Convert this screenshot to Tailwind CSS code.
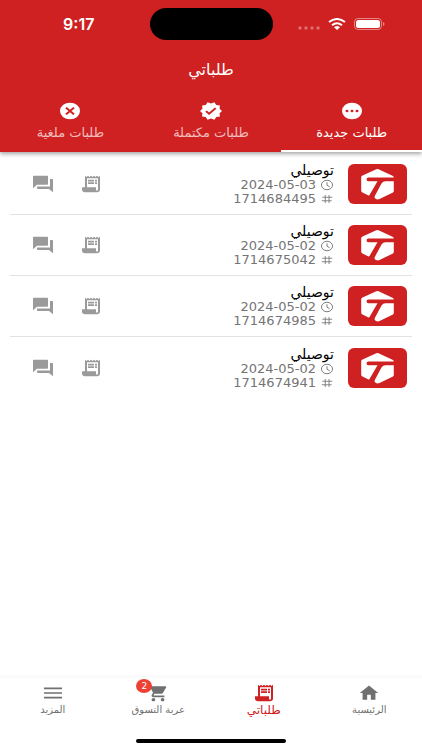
<!DOCTYPE html>
<html lang="ar" dir="rtl">
<head>
<meta charset="utf-8">
<meta name="viewport" content="width=device-width, initial-scale=1">
<title>طلباتي</title>
<script src="https://cdn.jsdelivr.net/npm/@tailwindcss/browser@4"></script>
</head>
<body class="min-h-screen flex flex-col bg-white font-['DejaVu_Sans',sans-serif]">
<svg class="hidden" aria-hidden="true">
  <symbol id="receipt" viewBox="0 0 24 24" preserveAspectRatio="none"><path d="M19.500 3.500L18 2l-1.500 1.500L15 2l-1.500 1.500L12 2l-1.500 1.500L9 2 7.500 3.500 6 2v14H3v3c0 1.660 1.340 3 3 3h12c1.660 0 3-1.340 3-3V2l-1.500 1.500zM19 19c0 .55-.45 1-1 1s-1-.45-1-1v-3H8V5h11v14zM9 7h6v2H9zM16 7h2v2h-2zM9 10h6v2H9zM16 10h2v2h-2z"/></symbol>
  <symbol id="chat" viewBox="0 0 24 24" preserveAspectRatio="none"><path d="M21 6h-2v9H6v2c0 .55.45 1 1 1h11l4 4V7c0-.55-.45-1-1-1zm-4 6V3c0-.55-.45-1-1-1H3c-.55 0-1 .45-1 1v14l4-4h10c.55 0 1-.45 1-1z"/></symbol>
  <symbol id="clock" viewBox="0 0 24 24" preserveAspectRatio="none"><path fill="none" stroke="currentColor" stroke-width="1.700" d="M12 2.500a9.500 9.500 0 1 0 0 19a9.500 9.500 0 1 0 0-19zM12 6.500V12.500l4.500 3"/></symbol>
  <symbol id="hash" viewBox="0 0 24 24" preserveAspectRatio="none"><path fill="none" stroke="currentColor" stroke-width="1.600" d="M4 8.500h17M3 15.500h17M9 4v16M15.500 4v16"/></symbol>
  <symbol id="brand" viewBox="0 0 59 40" preserveAspectRatio="none">
    <rect width="59" height="40" rx="6" fill="#cf2122"/>
    <path fill="#fff" d="M30.500 5.300L44.500 11.700Q45.800 12.500 45.800 13.500H20.500Q18.500 13.700 18.500 15.300Q18.500 17.200 20.500 17.300H29.500L21.500 31Q21 31.800 20 31.300L14.500 28.500Q13.200 27.800 13.200 26.500V13.200Q13.200 12.200 14.500 11.600L28.300 5.300Q29.500 4.800 30.500 5.300z"/>
    <path fill="#fff" d="M37.500 17.300H45.800V27Q45.800 28 44.500 28.700L31.500 35Q29.500 35.800 28 35Q25.800 34 26.800 32L33.500 19.500Q35 17.300 37.500 17.300z"/>
  </symbol>
</svg>

<header class="relative bg-[#cf2122] text-white shadow-[0_2px_4px_rgba(0,0,0,0.35)]">
  <div dir="ltr" class="grid grid-cols-[1fr_auto_1fr] items-center pt-2">
    <div class="ps-2 text-center font-['Inter',sans-serif] text-base font-semibold">9:17</div>
    <div class="h-8 w-[123px] rounded-full bg-black"></div>
    <div class="flex items-center justify-center gap-2 pe-3">
      <svg class="w-[22px] h-1 mt-2" viewBox="0 0 22 4" fill="#fff" fill-opacity=".35"><circle cx="2" cy="2" r="1.700"/><circle cx="8" cy="2" r="1.700"/><circle cx="14" cy="2" r="1.700"/><circle cx="20" cy="2" r="1.700"/></svg>
      <svg class="w-[18px] h-3" viewBox="0 0 18 12" preserveAspectRatio="none" fill="none" stroke="#fff" stroke-width="2"><path d="M1 4Q9-2 17 4M4 7.200Q9 3.200 14 7.200"/><path fill="#fff" stroke="none" d="M6 9.200Q9 7 12 9.200L9 12z"/></svg>
      <svg class="w-[31px] h-3" viewBox="0 0 31 12"><rect x=".5" y=".5" width="27" height="11" rx="3.500" fill="none" stroke="#fff" stroke-opacity=".45"/><rect x="2" y="2" width="24" height="8" rx="2.500" fill="#fff"/><path d="M29 4v4q1.500-.6 1.500-2t-1.500-2" fill="#fff" fill-opacity=".5"/></svg>
    </div>
  </div>
  <h1 class="pt-[18px] text-center text-base leading-6 font-normal">طلباتي</h1>
  <div role="tablist" class="grid grid-cols-3 pt-[19px] text-[13px] leading-4">
    <button role="tab" aria-selected="true" class="flex flex-col items-center gap-1 pb-[9px] border-b-2 border-white">
      <svg class="w-6 h-5" viewBox="0 0 24 24" preserveAspectRatio="none"><circle cx="12" cy="12" r="10" fill="#fff"/><g fill="#cf2122"><circle cx="7" cy="12" r="1.500"/><circle cx="12" cy="12" r="1.500"/><circle cx="17" cy="12" r="1.500"/></g></svg>
      <span>طلبات جديدة</span>
    </button>
    <button role="tab" aria-selected="false" class="flex flex-col items-center gap-1 pb-[9px] border-b-2 border-transparent">
      <svg class="w-6 h-5" viewBox="0 0 24 24" preserveAspectRatio="none" fill="#fff"><path d="M23 12l-2.440-2.790.34-3.690-3.610-.82-1.890-3.200L12 2.960 8.600 1.500 6.710 4.690 3.100 5.500l.34 3.700L1 12l2.440 2.790-.34 3.700 3.610.82L8.600 22.500l3.400-1.470 3.400 1.460 1.890-3.190 3.610-.82-.34-3.690L23 12zm-12.910 4.720l-3.800-3.810 1.480-1.480 2.320 2.330 5.850-5.870 1.480 1.480-7.330 7.350z"/></svg>
      <span class="text-white/70">طلبات مكتملة</span>
    </button>
    <button role="tab" aria-selected="false" class="flex flex-col items-center gap-1 pb-[9px] border-b-2 border-transparent">
      <svg class="w-6 h-5" viewBox="0 0 24 24" preserveAspectRatio="none"><circle cx="12" cy="12" r="10" fill="#fff"/><path d="M8 8l8 8M16 8l-8 8" stroke="#cf2122" stroke-width="2.200"/></svg>
      <span class="text-white/70">طلبات ملغية</span>
    </button>
  </div>
</header>

<main class="grow px-[10px] pt-[2px]">
  <ul class="divide-y divide-[#e2e2e2]">
    <li class="flex items-center h-[61px] ps-[5px] pe-[21px]">
      <svg class="w-[59px] h-10" role="img" aria-label="توصيلي"><use href="#brand"/></svg>
      <div class="grow ps-[14px] text-[13px] leading-[14px] text-[#757575]">
        <div class="text-sm text-black leading-4">توصيلي</div>
        <div class="flex items-center gap-1"><svg class="w-[14px] h-3"><use href="#clock"/></svg><span dir="ltr">2024-05-03</span></div>
        <div class="flex items-center gap-1"><svg class="w-[14px] h-3"><use href="#hash"/></svg><span>1714684495</span></div>
      </div>
      <div class="flex gap-6 text-[#9a9a9a]">
        <button aria-label="الفاتورة"><svg class="w-6 h-5 fill-current"><use href="#receipt"/></svg></button>
        <button aria-label="المحادثة"><svg class="w-6 h-5 fill-current"><use href="#chat"/></svg></button>
      </div>
    </li>
    <li class="flex items-center h-[61px] ps-[5px] pe-[21px]">
      <svg class="w-[59px] h-10" role="img" aria-label="توصيلي"><use href="#brand"/></svg>
      <div class="grow ps-[14px] text-[13px] leading-[14px] text-[#757575]">
        <div class="text-sm text-black leading-4">توصيلي</div>
        <div class="flex items-center gap-1"><svg class="w-[14px] h-3"><use href="#clock"/></svg><span dir="ltr">2024-05-02</span></div>
        <div class="flex items-center gap-1"><svg class="w-[14px] h-3"><use href="#hash"/></svg><span>1714675042</span></div>
      </div>
      <div class="flex gap-6 text-[#9a9a9a]">
        <button aria-label="الفاتورة"><svg class="w-6 h-5 fill-current"><use href="#receipt"/></svg></button>
        <button aria-label="المحادثة"><svg class="w-6 h-5 fill-current"><use href="#chat"/></svg></button>
      </div>
    </li>
    <li class="flex items-center h-[61px] ps-[5px] pe-[21px]">
      <svg class="w-[59px] h-10" role="img" aria-label="توصيلي"><use href="#brand"/></svg>
      <div class="grow ps-[14px] text-[13px] leading-[14px] text-[#757575]">
        <div class="text-sm text-black leading-4">توصيلي</div>
        <div class="flex items-center gap-1"><svg class="w-[14px] h-3"><use href="#clock"/></svg><span dir="ltr">2024-05-02</span></div>
        <div class="flex items-center gap-1"><svg class="w-[14px] h-3"><use href="#hash"/></svg><span>1714674985</span></div>
      </div>
      <div class="flex gap-6 text-[#9a9a9a]">
        <button aria-label="الفاتورة"><svg class="w-6 h-5 fill-current"><use href="#receipt"/></svg></button>
        <button aria-label="المحادثة"><svg class="w-6 h-5 fill-current"><use href="#chat"/></svg></button>
      </div>
    </li>
    <li class="flex items-center h-[61px] ps-[5px] pe-[21px]">
      <svg class="w-[59px] h-10" role="img" aria-label="توصيلي"><use href="#brand"/></svg>
      <div class="grow ps-[14px] text-[13px] leading-[14px] text-[#757575]">
        <div class="text-sm text-black leading-4">توصيلي</div>
        <div class="flex items-center gap-1"><svg class="w-[14px] h-3"><use href="#clock"/></svg><span dir="ltr">2024-05-02</span></div>
        <div class="flex items-center gap-1"><svg class="w-[14px] h-3"><use href="#hash"/></svg><span>1714674941</span></div>
      </div>
      <div class="flex gap-6 text-[#9a9a9a]">
        <button aria-label="الفاتورة"><svg class="w-6 h-5 fill-current"><use href="#receipt"/></svg></button>
        <button aria-label="المحادثة"><svg class="w-6 h-5 fill-current"><use href="#chat"/></svg></button>
      </div>
    </li>
  </ul>
</main>

<footer class="bg-white border-t border-[#fafafa] pt-[5px] pb-[7px] shadow-[0_-1px_3px_rgba(0,0,0,0.03)]">
  <nav class="grid grid-cols-4 text-[10px] leading-[14px] text-[#707070]">
    <a href="#" class="flex flex-col items-center">
      <svg class="w-[22px] h-5 fill-current" viewBox="0 0 24 24" preserveAspectRatio="none"><path d="M10 20v-6h4v6h5v-8h3L12 3 2 12h3v8z"/></svg>
      <span>الرئيسية</span>
    </a>
    <a href="#" aria-current="page" class="flex flex-col items-center text-[#cf2122] text-xs leading-[14px]">
      <svg class="w-6 h-5 fill-current"><use href="#receipt"/></svg>
      <span>طلباتي</span>
    </a>
    <a href="#" class="flex flex-col items-center">
      <span class="relative">
        <svg class="w-[22px] h-5 fill-current" viewBox="0 0 24 24" preserveAspectRatio="none"><path d="M7 18c-1.100 0-1.990.9-1.990 2S5.900 22 7 22s2-.9 2-2-.9-2-2-2zM1 2v2h2l3.600 7.590-1.350 2.450c-.16.28-.25.61-.25.96 0 1.100.9 2 2 2h12v-2H7.420c-.14 0-.25-.11-.25-.25l.03-.12.9-1.630h7.450c.75 0 1.410-.41 1.750-1.030l3.580-6.490c.08-.14.12-.31.12-.48 0-.55-.45-1-1-1H5.210l-.94-2H1zm16 16c-1.100 0-1.990.9-1.990 2s.89 2 1.990 2 2-.9 2-2-.9-2-2-2z"/></svg>
        <span class="absolute -left-[11px] -top-1 flex h-[14px] w-4 items-center justify-center rounded-[50%] bg-[#ee4035] text-[9px] text-white">2</span>
      </span>
      <span>عربة التسوق</span>
    </a>
    <a href="#" class="flex flex-col items-center">
      <svg class="w-6 h-5" viewBox="0 0 24 24" preserveAspectRatio="none" stroke="currentColor" stroke-width="2"><path d="M3 6.500h18M3 12h18M3 17.500h18"/></svg>
      <span>المزيد</span>
    </a>
  </nav>
  <div class="mx-auto mt-[22px] h-1 w-[150px] rounded-full bg-black"></div>
</footer>
</body>
</html>
